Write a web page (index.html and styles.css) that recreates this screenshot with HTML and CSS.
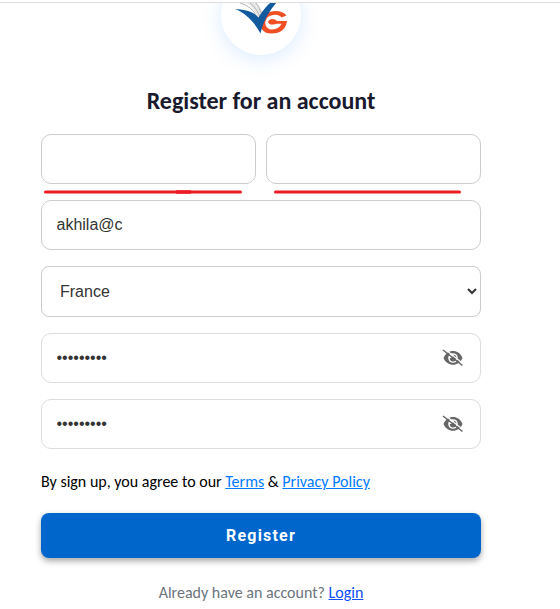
FILE: index.html
```html
<!DOCTYPE html>
<html lang="en">
<head>
    <meta charset="UTF-8">
    <meta name="viewport" content="width=device-width, initial-scale=1.0">
    <title>Register</title>
    <link rel="stylesheet" href="styles.css">
</head>
<body>
    <div class="topbar"></div>
    <div class="container">
        <div class="logo">
            <svg width="80" height="80" viewBox="0 0 80 80">
                <path d="M17 25 Q32 28 37 43 L43 39 Q37 27 27 22 Z" fill="#e8e8e8"/>
                <path d="M19 28 Q31 31 36 42 M25 25 Q35 31 39 42 M32 24 Q39 32 41 40" fill="none" stroke="#b4b4b4" stroke-width="1"/>
                <path d="M65.500 40.500 C61 34.500 50 34.500 43.500 40 C36 47 39 58.500 50 58.500 C60 58.500 65 54 66 46 H56 Q54.500 44 51 44 Q47.500 44.500 47 47 Q48 50 53 49.500 L56 48.800 H60.500 Q58 54.500 51 54.500 C43.500 54.500 42.500 46 47 42 C53 38.500 58 39.500 60.500 42.500 Z" fill="#f04e23"/>
                <path d="M14 34 C23 34.500 32 36 37.500 42.500 C41.500 36 46 30 50.500 27 H56 C48 36 42 47 39.500 58.500 C34 48 25 38 14 34 Z" fill="#125a9e"/>
            </svg>
        </div>

        <h2>Register for an account</h2>

        <form class="register-form">
            <div class="name-row">
                <div class="name-field">
                    <input class="field" type="text" aria-label="First name">
                    <svg class="mark" width="198" height="4" viewBox="0 0 198 4">
                        <path d="M1.500 2 H196.500" stroke="#ed1c24" stroke-width="3" stroke-linecap="round"/>
                        <path d="M132 2 H147" stroke="#ed1c24" stroke-width="3.500"/>
                    </svg>
                </div>
                <div class="name-field">
                    <input class="field" type="text" aria-label="Last name">
                    <svg class="mark mark-right" width="187" height="4" viewBox="0 0 187 4">
                        <path d="M1.500 2 H185.500" stroke="#ed1c24" stroke-width="3" stroke-linecap="round"/>
                    </svg>
                </div>
            </div>
            <input class="field" type="text" value="akhila@c" aria-label="Email" spellcheck="false">
            <select class="field country" aria-label="Country">
                <option>France</option>
            </select>
            <div class="field password">
                <input type="password" value="password1" aria-label="Password">
                <svg class="eye" width="22" height="18" viewBox="0 0 22 18">
                    <path d="M1.500 9 C5 -.5 17 -.5 20.500 9 C17 18 5 18 1.500 9 Z" fill="#666"/>
                    <circle cx="11" cy="9" r="4.800" fill="#fff"/>
                    <path d="M11 5.800 A3.300 3.300 0 1 1 7.800 9 Q10.500 9.500 11 5.800 Z" fill="#666"/>
                    <path d="M2.500 -.2 L21.500 15" stroke="#fff" stroke-width="1.300"/>
                    <path d="M1 1 L20.500 16.500" stroke="#666" stroke-width="1.500"/>
                </svg>
            </div>
            <div class="field password">
                <input type="password" value="password1" aria-label="Confirm password">
                <svg class="eye" width="22" height="18" viewBox="0 0 22 18">
                    <path d="M1.500 9 C5 -.5 17 -.5 20.500 9 C17 18 5 18 1.500 9 Z" fill="#666"/>
                    <circle cx="11" cy="9" r="4.800" fill="#fff"/>
                    <path d="M11 5.800 A3.300 3.300 0 1 1 7.800 9 Q10.500 9.500 11 5.800 Z" fill="#666"/>
                    <path d="M2.500 -.2 L21.500 15" stroke="#fff" stroke-width="1.300"/>
                    <path d="M1 1 L20.500 16.500" stroke="#666" stroke-width="1.500"/>
                </svg>
            </div>
            <p class="terms">By sign up, you agree to our <a href="#">Terms</a> &amp; <a href="#">Privacy Policy</a></p>
            <button class="btn" type="button">Register</button>
        </form>
        <p class="login">Already have an account? <a href="#">Login</a></p>
    </div>
</body>
</html>
```
FILE: styles.css
```css
* { box-sizing: border-box; }
body { margin: 0; height: 609px; overflow: hidden; background: #fff; font-family: Carlito, Lato, sans-serif; }
.topbar { position: relative; z-index: 1; height: 3px; background: #fff; border-bottom: 1px solid #ddd; }
.container { width: 440px; margin-left: 41px; }

.logo { width: 80px; height: 80px; margin: -28px auto 0; border-radius: 50%; background: #fff; box-shadow: 0 4px 20px rgba(0, 123, 255, 0.15); }
.logo svg { display: block; }
h2 { margin: 32px 0 0; height: 28px; line-height: 28px; font-size: 24px; font-weight: 700; text-align: center; color: #1a1a2e; white-space: nowrap; }

.register-form { display: flex; flex-direction: column; gap: 16px; margin-top: 19px; }
.name-row { display: flex; gap: 10px; }
.name-field { position: relative; flex: 1; height: 50px; }
.field { display: block; width: 100%; height: 50px; padding: 0 14.5px; border: 1px solid #ccc; border-radius: 10px; background: #fff; color: #333; font: 16px "Liberation Sans", Arial, sans-serif; }
.country { height: 51px; border-radius: 8px; padding: 0 14px; }

/* red underline below each name box */
.mark { position: absolute; left: 3px; top: 56px; }
.mark-right { left: 8px; }

.password { display: flex; align-items: center; justify-content: space-between; padding-right: 16.5px; border-color: #ddd; }
.password input { width: 300px; padding: 0; border: 0; outline: 0; color: #333; font: inherit; }
.eye { flex: none; }

.terms { margin: 6px 0 0; height: 20px; line-height: 21px; font-size: 16px; color: #000; white-space: nowrap; }
.terms a { color: #007bff; }
.btn { height: 45px; margin-top: 6px; border: 0; border-radius: 8px; background: #0066cc; color: #fff; font: 700 16px Roboto, sans-serif; letter-spacing: 1.2px; box-shadow: 0 3px 6px rgba(0, 0, 0, 0.35); }
.login { margin: 24px 0 0; height: 20px; line-height: 21px; font-size: 16px; text-align: center; color: #6c757d; white-space: nowrap; }
.login a { color: #0d4ffd; }
```
